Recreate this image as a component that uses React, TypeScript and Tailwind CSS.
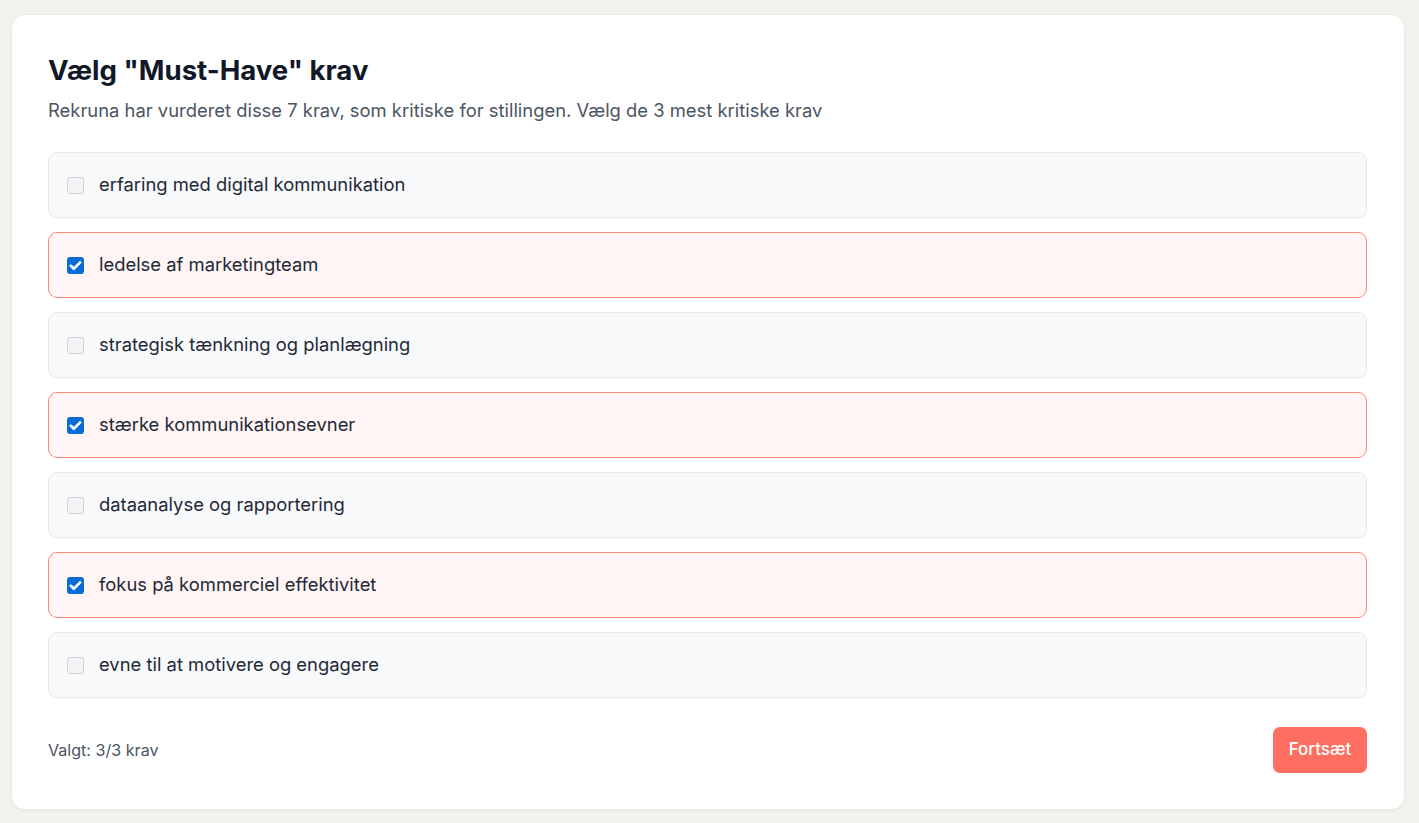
import React, { useState } from 'react';

const KRAV = [
  'erfaring med digital kommunikation',
  'ledelse af marketingteam',
  'strategisk tænkning og planlægning',
  'stærke kommunikationsevner',
  'dataanalyse og rapportering',
  'fokus på kommerciel effektivitet',
  'evne til at motivere og engagere',
];

const Check = ({ on }: { on: boolean }) =>
  on ? (
    <span className="w-[17px] h-[17px] shrink-0 rounded-[3px] bg-[#0b6bd6] flex items-center justify-center">
      <svg viewBox="0 0 16 16" className="w-[15px] h-[15px]">
        <path d="M3 8.3l3.2 3.2L13 4.6" fill="none" stroke="white" strokeWidth="2.8" strokeLinecap="round" strokeLinejoin="round" />
      </svg>
    </span>
  ) : (
    <span className="w-[17px] h-[17px] shrink-0 rounded-[3px] bg-[#f3f4f6] border border-[#cfd2d6]" />
  );

const App = () => {
  const [selected, setSelected] = useState<number[]>([1, 3, 5]);

  const toggle = (i: number) => {
    setSelected((prev) =>
      prev.includes(i) ? prev.filter((x) => x !== i) : prev.length < 3 ? [...prev, i] : prev
    );
  };

  return (
    <div className="min-h-screen bg-[#f3f3ee] pt-[14px] pb-[15px] pl-[11px] pr-[14px] font-['Inter',sans-serif]">
      <div className="bg-white rounded-[14px] border border-[#ebebe6] shadow-[0_1px_3px_rgba(0,0,0,0.06)] pl-9 pr-[37px] pt-[35px] pb-[36px]">
        <h1 className="text-[27.6px] leading-10 font-bold text-[#111827]">Vælg "Must-Have" krav</h1>
        <p className="mt-[6px] text-[18.4px] leading-7 text-[#4b5563]">
          Rekruna har vurderet disse 7 krav, som kritiske for stillingen. Vælg de 3 mest kritiske krav
        </p>

        <div className="mt-7 flex flex-col gap-[14px]">
          {KRAV.map((k, i) => {
            const on = selected.includes(i);
            return (
              <div
                key={k}
                onClick={() => toggle(i)}
                className={`h-[66px] flex items-center gap-[15px] px-[18px] rounded-[9px] border cursor-pointer ${
                  on ? 'bg-[#fff5f4] border-[#fb8b7f]' : 'bg-[#f8f9fb] border-[#e5e7eb]'
                }`}
              >
                <Check on={on} />
                <span className="text-[18.4px] text-[#1f2937]">{k}</span>
              </div>
            );
          })}
        </div>

        <div className="mt-[29px] flex items-center justify-between">
          <span className="text-[16.1px] text-[#4b5563]">Valgt: {selected.length}/3 krav</span>
          <button className="h-[46px] w-[94px] rounded-[7px] bg-[#ff6f61] text-white text-[17px] font-medium">
            Fortsæt
          </button>
        </div>
      </div>
    </div>
  );
};

export default App;
